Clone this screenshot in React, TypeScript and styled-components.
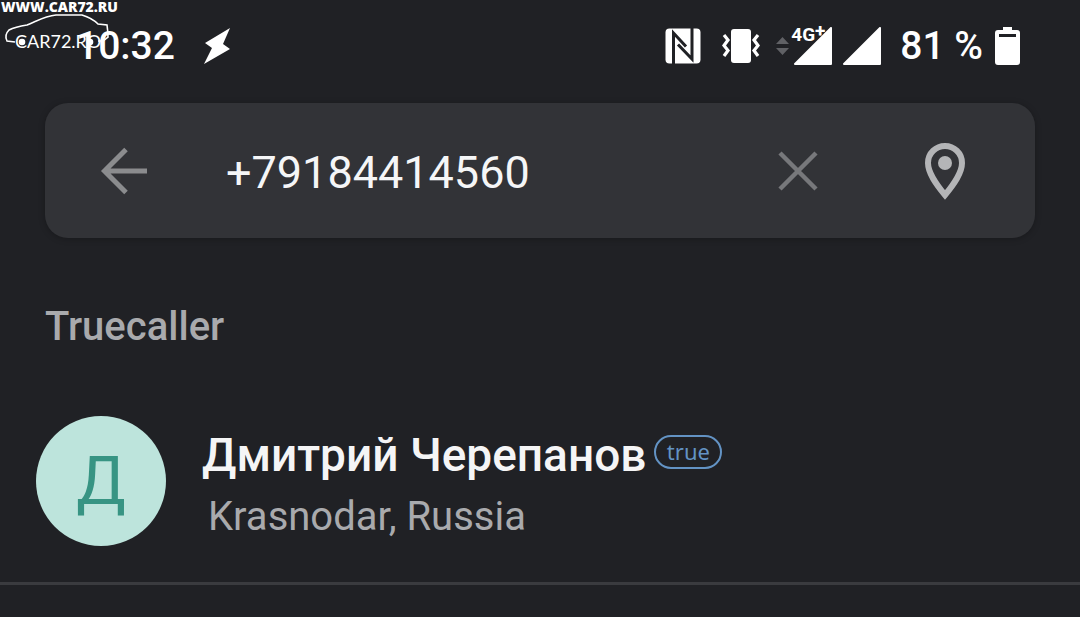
import React, { useState } from "react";
import styled, { createGlobalStyle } from "styled-components";

const GlobalStyle = createGlobalStyle`
  * { box-sizing: border-box; }
  body {
    margin: 0;
    background: #202125;
    color: #f4f4f5;
    font-family: Roboto, "Noto Sans", sans-serif;
  }
`;

const Screen = styled.div`
  position: relative;
  width: 100%;
  min-height: 100vh;
`;

const StatusBar = styled.header`
  display: flex;
  align-items: center;
  justify-content: space-between;
  padding: 27px 60px 38px 76px;
  height: 103px;
`;

const StatusGroup = styled.div<{ $gap: number }>`
  display: flex;
  align-items: center;
  gap: ${(p) => p.$gap}px;
`;

const StatusText = styled.span`
  font-size: 39px;
  line-height: 38px;
  font-weight: 500;
  color: #ffffff;
  white-space: nowrap;
`;

const Signal = styled.span`
  position: relative;
  display: flex;
`;

const NetworkLabel = styled.span`
  position: absolute;
  top: -2px;
  left: 15px;
  font-size: 19px;
  line-height: 20px;
  font-weight: 700;
  color: #ffffff;
`;

const NetworkPlus = styled.span`
  position: absolute;
  top: -4px;
  left: 100%;
`;

const Watermark = styled.div`
  position: absolute;
  top: 0;
  left: 0;
  color: #ffffff;
`;

const SiteLine = styled.div`
  padding-left: 1px;
  font-family: "Open Sans", sans-serif;
  font-size: 14px;
  line-height: 14px;
  font-weight: 800;
`;

const LogoText = styled.div`
  position: absolute;
  top: 31px;
  left: 15px;
  font-family: Lato, sans-serif;
  font-size: 18px;
  line-height: 20px;
`;

const CarOutline = styled.svg`
  display: block;
`;

const SearchBar = styled.form`
  display: flex;
  align-items: center;
  margin: 0 45px;
  height: 135px;
  padding: 0 60px 0 49px;
  border-radius: 23px;
  background: #323337;
  box-shadow: 0 1px 6px rgba(0, 0, 0, 0.25);
`;

const IconButton = styled.button<{ $color: string }>`
  display: flex;
  align-items: center;
  justify-content: center;
  flex: none;
  width: 60px;
  height: 60px;
  padding: 0;
  border: 0;
  background: none;
  color: ${(p) => p.$color};
  cursor: pointer;
`;

const SearchInput = styled.input`
  flex: 1;
  min-width: 0;
  height: 60px;
  margin: 4px 0 0 72px;
  padding: 0;
  border: 0;
  outline: 0;
  background: none;
  color: #f5f6f7;
  font: 400 45px/60px Roboto, sans-serif;
`;

const ButtonPair = styled.div`
  display: flex;
  gap: 87px;
`;

const SectionTitle = styled.h2`
  margin: 65px 45px 0;
  font-size: 40px;
  line-height: 48px;
  font-weight: 500;
  color: #a9aaad;
`;

const ContactRow = styled.section`
  display: flex;
  align-items: center;
  gap: 36px;
  margin-top: 65px;
  padding: 0 36px 36px;
  border-bottom: 3px solid #3a3b3f;
`;

const Avatar = styled.div`
  display: flex;
  align-items: center;
  justify-content: center;
  flex: none;
  width: 130px;
  height: 130px;
  padding-top: 2px;
  border-radius: 50%;
  background: #bde4dc;
  color: #379483;
  font-size: 66px;
  line-height: 80px;
`;

const ContactInfo = styled.div`
  display: flex;
  flex-direction: column;
  gap: 10px;
  padding-top: 6px;
`;

const NameLine = styled.div`
  display: flex;
  align-items: center;
  gap: 8px;
`;

const Name = styled.h3`
  margin: 0;
  font-size: 46px;
  line-height: 56px;
  font-weight: 500;
  color: #f5f5f6;
`;

const Badge = styled.span`
  display: flex;
  align-items: center;
  justify-content: center;
  width: 68px;
  height: 34px;
  margin-bottom: 6px;
  padding-bottom: 2px;
  border: 2px solid #6393c4;
  border-radius: 17px;
  color: #6393c4;
  font: 400 22px/28px "Noto Sans", sans-serif;
`;

const Location = styled.p`
  margin: 0;
  padding-left: 6px;
  font-size: 40px;
  line-height: 48px;
  color: #a9aaad;
`;

const Triangle = () => (
  <svg width="38" height="38" viewBox="0 0 38 38" aria-hidden="true">
    <path d="M1 37 37 1V37Z" fill="#fff" stroke="#fff" strokeWidth="2" strokeLinejoin="round" />
  </svg>
);

export default function App() {
  const [query, setQuery] = useState("+79184414560");

  return (
    <>
      <GlobalStyle />
      <Screen>
        <StatusBar>
          <StatusGroup $gap={28}>
            <StatusText>10:32</StatusText>
            <svg width="28" height="36" viewBox="0 0 28 36" fill="#fff" aria-hidden="true">
              <path d="M27 0 2 15 9 20 1 36 27 21 20 16Z" />
            </svg>
          </StatusGroup>
          <StatusGroup $gap={19}>
            <StatusGroup $gap={16}>
              <StatusGroup $gap={21}>
                <svg width="36" height="36" viewBox="0 0 36 36" aria-hidden="true">
                  <rect x="0.500" y="0.500" width="35" height="35" rx="4" fill="#fff" />
                  <path d="M8.500 36V5L21 18.500M27 0V31L13 16.500" fill="none" stroke="#202125" strokeWidth="3" />
                </svg>
                <svg width="38" height="36" viewBox="0 0 38 36" aria-hidden="true">
                  <rect x="9" y="1" width="20" height="34" rx="3" fill="#fff" />
                  <path d="M2 7 6 12 2 17.500 6 22.500 2 28M36 7 32 12 36 17.500 32 22.500 36 28" fill="none" stroke="#fff" strokeWidth="3.200" />
                </svg>
              </StatusGroup>
              <StatusGroup $gap={11}>
                <Signal>
                  <svg width="56" height="38" viewBox="0 0 56 38" aria-hidden="true">
                    <path d="M0 17 6.500 10 13 17ZM0 21H13L6.500 28Z" fill="#606165" />
                    <path d="M19 37 55 1V37Z" fill="#fff" stroke="#fff" strokeWidth="2" strokeLinejoin="round" />
                  </svg>
                  <NetworkLabel>
                    4G<NetworkPlus>+</NetworkPlus>
                  </NetworkLabel>
                </Signal>
                <Triangle />
              </StatusGroup>
            </StatusGroup>
            <StatusGroup $gap={12}>
              <StatusText>81 %</StatusText>
              <svg width="25" height="38" viewBox="0 0 25 38" aria-hidden="true">
                <path d="M8 0H17V3H22Q25 3 25 6V35Q25 38 22 38H3Q0 38 0 35V6Q0 3 3 3H8Z" fill="#fff" />
                <path d="M4 7H21V10H4Z" fill="#202125" />
              </svg>
            </StatusGroup>
          </StatusGroup>
        </StatusBar>

        <Watermark>
          <SiteLine>WWW.CAR72.RU</SiteLine>
          <CarOutline width="112" height="38" viewBox="0 0 112 38" fill="none" stroke="#fff" strokeWidth="1.600" aria-hidden="true">
            <path d="M15 28 7 27Q4 21 9 16Q15 13 27 11C37 7 45 2 56 1H82Q92 4 98 10L107 11Q108 18 108 23L103 27H98" />
            <circle cx="22" cy="28" r="2.500" fill="#fff" />
            <circle cx="90" cy="28" r="2.500" fill="#fff" />
          </CarOutline>
          <LogoText>CAR72.RO</LogoText>
        </Watermark>

        <SearchBar role="search" onSubmit={(e) => e.preventDefault()}>
          <IconButton type="button" aria-label="Back" $color="#8b8c8e">
            <svg width="48" height="48" viewBox="0 0 48 48" fill="none" stroke="currentColor" strokeWidth="5">
              <path d="M26 2.500 4.500 24 26 45.500M5 24H47" />
            </svg>
          </IconButton>
          <SearchInput
            type="tel"
            aria-label="Search"
            value={query}
            onChange={(e) => setQuery(e.target.value)}
          />
          <ButtonPair>
            <IconButton type="button" aria-label="Clear" $color="#77787b" onClick={() => setQuery("")}>
              <svg width="40" height="40" viewBox="0 0 40 40" fill="none" stroke="currentColor" strokeWidth="4.500">
                <path d="M2 2 38 38M38 2 2 38" />
              </svg>
            </IconButton>
            <IconButton type="button" aria-label="Nearby places" $color="#b4b5b7">
              <svg width="40" height="58" viewBox="0 0 40 58" fill="none">
                <path
                  d="M20 4C11 4 3 11 3 21C3 31 11 42 20 53C29 42 37 31 37 21C37 11 29 4 20 4Z"
                  stroke="currentColor"
                  strokeWidth="6"
                />
                <circle cx="20" cy="21" r="7" fill="currentColor" />
              </svg>
            </IconButton>
          </ButtonPair>
        </SearchBar>

        <main>
          <SectionTitle>Truecaller</SectionTitle>
          <ContactRow>
            <Avatar aria-hidden="true">Д</Avatar>
            <ContactInfo>
              <NameLine>
                <Name>Дмитрий Черепанов</Name>
                <Badge>true</Badge>
              </NameLine>
              <Location>Krasnodar, Russia</Location>
            </ContactInfo>
          </ContactRow>
        </main>
      </Screen>
    </>
  );
}
